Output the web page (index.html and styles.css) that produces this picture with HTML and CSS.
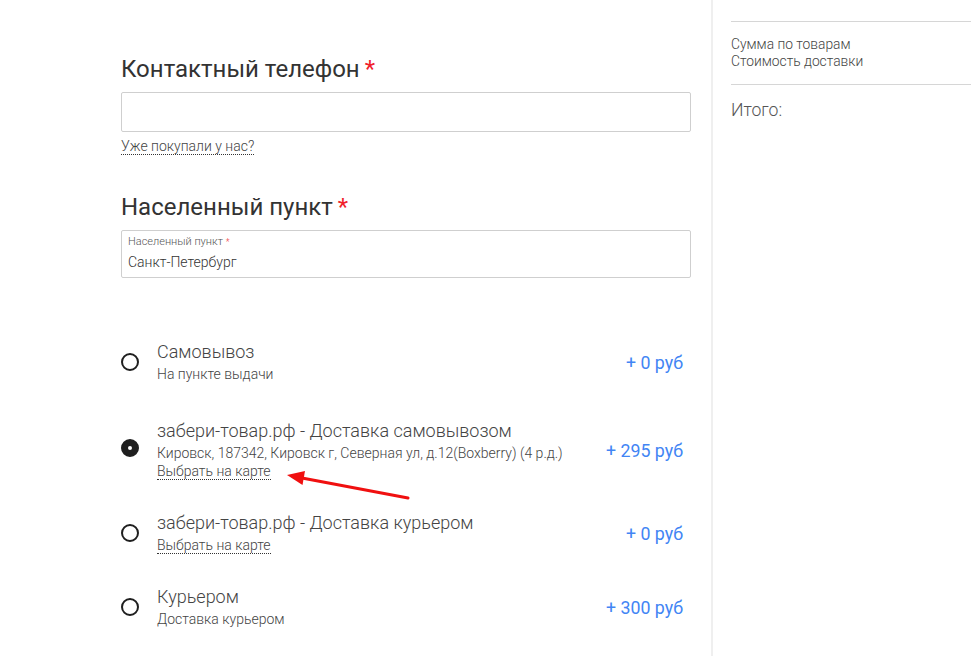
FILE: index.html
```html
<!DOCTYPE html>
<html lang="ru">
<head>
  <meta charset="UTF-8">
  <meta name="viewport" content="width=device-width, initial-scale=1.0">
  <title>Оформление заказа</title>
  <link rel="stylesheet" href="styles.css">
</head>
<body>
  <div class="page">
    <div class="main">
      <div class="section-title">Контактный телефон<span class="req">*</span></div>
      <div class="field"></div>
      <a class="dotted hint">Уже покупали у нас?</a>

      <div class="section-title city-title">Населенный пункт<span class="req">*</span></div>
      <div class="field field-labeled">
        <div class="field-label">Населенный пункт <span class="req">*</span></div>
        <div class="field-value">Санкт-Петербург</div>
      </div>

      <div class="delivery">
        <div class="option">
          <span class="radio"></span>
          <div class="option-body">
            <div class="option-title">Самовывоз</div>
            <div class="option-sub">На пункте выдачи</div>
          </div>
          <div class="price">+ 0 руб</div>
        </div>
        <div class="option">
          <span class="radio checked"></span>
          <div class="option-body">
            <div class="option-title">забери-товар.рф - Доставка самовывозом</div>
            <div class="option-sub">Кировск, 187342, Кировск г, Северная ул, д.12(Boxberry) (4 р.д.)</div>
            <div class="option-sub"><a class="dotted">Выбрать на карте</a></div>
          </div>
          <div class="price">+ 295 руб</div>
        </div>
        <div class="option">
          <span class="radio"></span>
          <div class="option-body">
            <div class="option-title">забери-товар.рф - Доставка курьером</div>
            <div class="option-sub"><a class="dotted">Выбрать на карте</a></div>
          </div>
          <div class="price">+ 0 руб</div>
        </div>
        <div class="option">
          <span class="radio"></span>
          <div class="option-body">
            <div class="option-title">Курьером</div>
            <div class="option-sub">Доставка курьером</div>
          </div>
          <div class="price">+ 300 руб</div>
        </div>
      </div>

      <!-- red pointer to the map link -->
      <svg class="pointer" width="140" height="50" viewBox="0 0 140 50">
        <line x1="128" y1="38" x2="22" y2="18" stroke="#f01010" stroke-width="3" stroke-linecap="round"/>
        <polygon points="7,15 25,11 22.5,25" fill="#f01010"/>
      </svg>
    </div>

    <div class="sidebar">
      <div class="sum-rows">
        <div>Сумма по товарам</div>
        <div>Стоимость доставки</div>
      </div>
      <div class="total">Итого:</div>
    </div>
  </div>
</body>
</html>
```

FILE: styles.css
```css
body {
  margin: 0;
  font-family: Roboto, 'Liberation Sans', sans-serif;
  background: #ffffff;
  color: #333;
}
.page {
  display: flex;
  min-height: 656px;
}
.main {
  position: relative;
  width: 711px;
  box-sizing: border-box;
  padding: 54px 20px 0 121px;
}
.section-title {
  font-size: 24px;
  line-height: 30px;
  color: #333;
  margin-bottom: 8px;
}
.city-title {
  margin-top: 37px;
}
.req {
  color: #f0202a;
}
.section-title .req {
  margin-left: 5px;
}
.field {
  height: 40px;
  border: 1px solid #cfcfcf;
  border-radius: 2px;
  box-sizing: border-box;
}
.field-labeled {
  height: 48px;
  padding: 5px 6px 0;
}
.field-label {
  font-size: 11px;
  line-height: 12px;
  color: #555;
  font-weight: 300;
}
.field-label .req {
  font-size: 9px;
  vertical-align: top;
}
.field-value {
  margin-top: 5px;
  font-size: 14px;
  line-height: 18px;
  color: #333;
  font-weight: 300;
}
.dotted {
  color: #444;
  border-bottom: 1px dotted #333;
  text-decoration: none;
  cursor: pointer;
}
.hint {
  display: inline-block;
  margin-top: 6px;
  font-size: 14px;
  font-weight: 300;
  line-height: 16px;
}
.delivery {
  margin-top: 63px;
  display: flex;
  flex-direction: column;
  gap: 32px;
}
.option {
  display: flex;
  align-items: center;
  padding-right: 8px;
}
.option:first-child {
  margin-bottom: 5px;
}
.radio {
  width: 18px;
  height: 18px;
  box-sizing: border-box;
  border: 2px solid #1f1f1f;
  border-radius: 50%;
  margin-right: 18px;
  flex-shrink: 0;
  position: relative;
}
.radio.checked {
  background: #1f1f1f;
  margin-bottom: 5px;
}
.radio.checked::after {
  content: "";
  position: absolute;
  left: 5px;
  top: 5px;
  width: 4px;
  height: 4px;
  border-radius: 50%;
  background: #fff;
}
.option-body {
  flex: 1;
}
.option-title {
  font-size: 18px;
  font-weight: 300;
  line-height: 22px;
  color: #444;
  margin-bottom: 2px;
}
.option-sub {
  font-size: 14px;
  font-weight: 300;
  line-height: 18px;
  color: #444;
}
.price {
  font-size: 17.8px;
  color: #4285f4;
  white-space: nowrap;
}
.pointer {
  position: absolute;
  left: 280px;
  top: 460px;
}
.sidebar {
  flex: 1;
  border-left: 2px solid #efefef;
  padding: 21px 0 0 18px;
}
.sum-rows {
  border-top: 1px solid #d6d6d6;
  border-bottom: 1px solid #d6d6d6;
  padding: 14px 0;
  font-size: 13.8px;
  font-weight: 300;
  line-height: 17px;
  color: #444;
}
.total {
  margin-top: 15px;
  font-size: 17.6px;
  font-weight: 300;
  line-height: 20px;
  color: #555;
}
```
